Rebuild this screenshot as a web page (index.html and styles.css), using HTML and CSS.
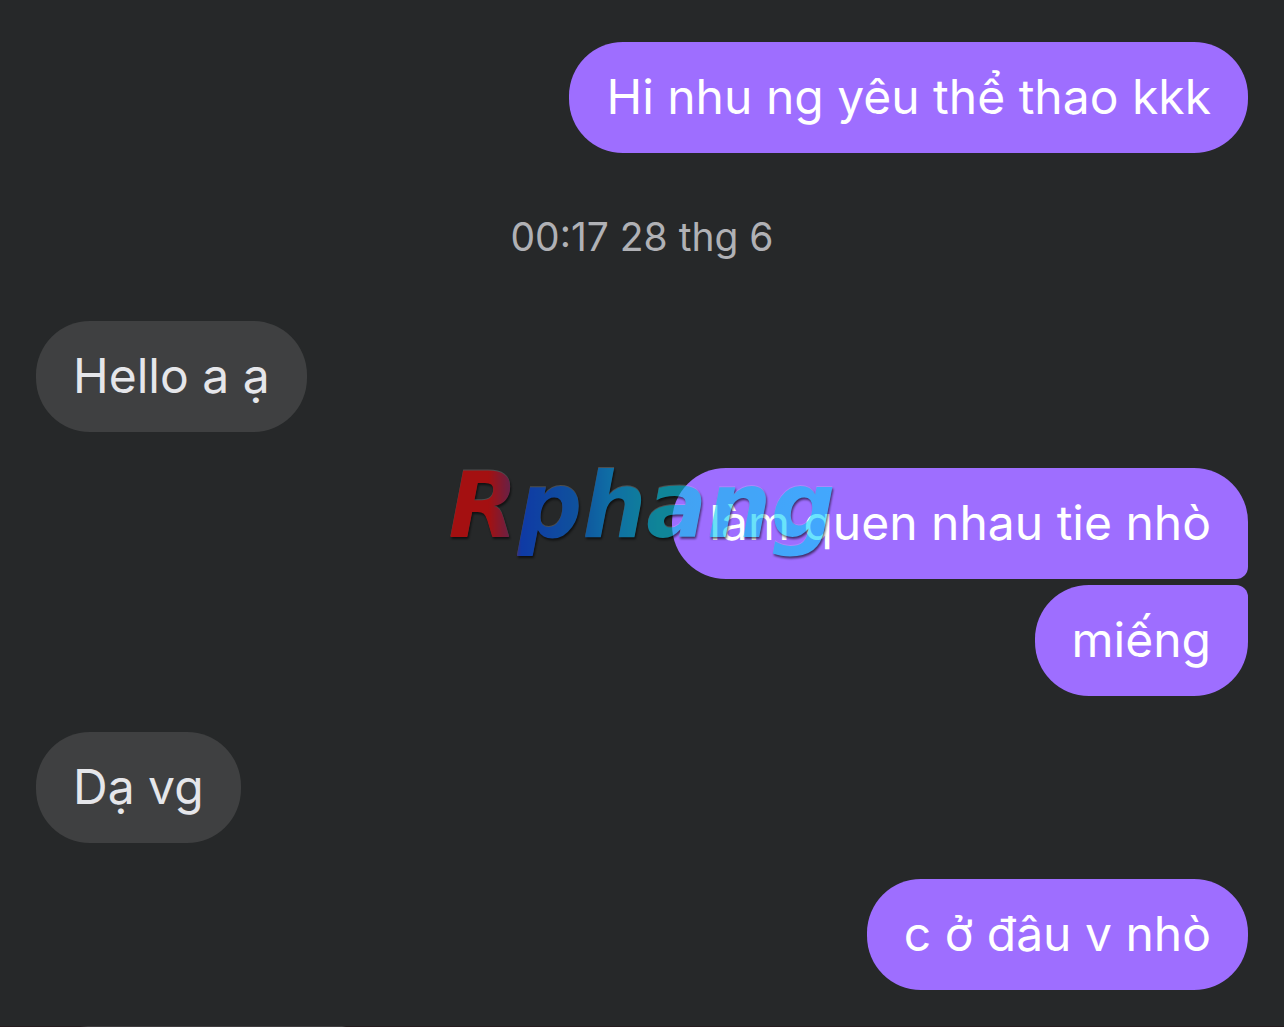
FILE: index.html
```html
<!DOCTYPE html>
<html lang="vi">
<head>
<meta charset="utf-8">
<meta name="viewport" content="width=device-width, initial-scale=1">
<title>Chat</title>
<link rel="stylesheet" href="styles.css">
</head>
<body>
<main class="chat">
  <p class="message sent">Hi nhu ng yêu thể thao kkk</p>
  <time class="timestamp">00:17 28 thg 6</time>
  <p class="message received">Hello a ạ</p>
  <div class="group">
    <p class="message sent first">làm quen nhau tie nhò</p>
    <p class="message sent last">miếng</p>
    <span class="watermark">Rphang</span>
  </div>
  <p class="message received">Dạ vg</p>
  <p class="message sent">c ở đâu v nhò</p>
</main>
<div class="bottom-edge"></div>
</body>
</html>
```
FILE: styles.css
```css
* {
  box-sizing: border-box;
}

body {
  margin: 0;
  min-height: 100vh;
  display: flex;
  flex-direction: column;
  background: #262829;
  font-family: Inter, "Noto Sans", sans-serif;
}

.chat {
  flex: 1;
  display: flex;
  flex-direction: column;
  gap: 36px;
  padding: 42px 36px 36px;
}

.message {
  margin: 0;
  padding: 25px 37px 26px;
  border-radius: 54px;
  font-size: 48px;
  line-height: 60px;
}

.sent {
  align-self: flex-end;
  background: #9e6eff;
  color: #fff;
}

.received {
  align-self: flex-start;
  background: #3f4041;
  color: #e5e6ea;
}

.timestamp {
  align-self: center;
  padding: 24px 0;
  color: #b0b1b5;
  font-size: 39px;
  line-height: 48px;
}

.group {
  position: relative;
  display: flex;
  flex-direction: column;
  gap: 6px;
}

.first {
  border-bottom-right-radius: 12px;
}

.last {
  border-top-right-radius: 12px;
}

.watermark {
  position: absolute;
  top: -14px;
  left: 50%;
  padding: 0 8px;
  transform: translateX(-50%);
  background: linear-gradient(90deg, #f00 12%, #8a2068 18%, #0048ff 20%, #0070f0 34%, #00a0ff 42%, #00c8e8 54%, #00d2ff 100%);
  -webkit-background-clip: text;
  background-clip: text;
  color: transparent;
  font: italic bold 90px/104px "DejaVu Sans", sans-serif;
  opacity: 0.58;
  filter: drop-shadow(0 -1px 0 #ffffff50) drop-shadow(1px 2px 1px #000);
  pointer-events: none;
}

.bottom-edge {
  height: 1px;
  background: linear-gradient(90deg, #251b1e 80px, #403c3e 88px 342px, #251b1e 346px);
}
```
